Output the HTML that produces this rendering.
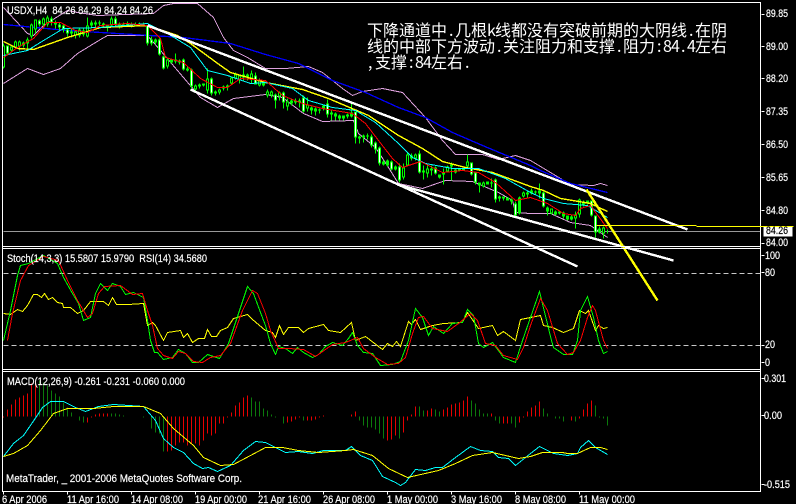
<!DOCTYPE html>
<html lang="zh"><head><meta charset="utf-8"><title>USDX,H4</title>
<style>
html,body{margin:0;padding:0;background:#000;width:796px;height:504px;overflow:hidden}
svg{display:block}
text{font-family:"Liberation Sans","WenQuanYi Zen Hei",sans-serif;font-size:11px;fill:#fff;stroke:#fff;stroke-width:.2}
.c{font-size:16px;font-family:"WenQuanYi Zen Hei","Noto Sans CJK SC",sans-serif;stroke:none}
.l{fill:none;shape-rendering:crispEdges}
</style></head><body>
<svg width="796" height="504" viewBox="0 0 796 504" xmlns="http://www.w3.org/2000/svg">
<rect width="796" height="504" fill="#000"/>
<g transform="translate(.5 .5)">
<!-- reference lines -->
<path class="l" stroke="#999" d="M3 231H760"/>
<path class="l" stroke="#c8c8c8" stroke-dasharray="5 3" d="M3 273H760M3 345H760"/>
<!-- bands -->
<polyline class="l" stroke="#dda0dd" points="3,7 27,33 33,35 43,25 67,10 77,12 97,15 153,13 163,5 173,3 197,3 213,17 223,37 233,50 247,57 265,68 285,68 308,66 322,72 342,88 352,95 362,91 382,88 402,92 425,117 442,140 455,154 482,154 498,159 515,155 530,160 570,184 593,185 600,183 607,185"/>
<polyline class="l" stroke="#dda0dd" points="3,83 27,68 43,74 60,68 77,53 100,39 107,35 147,35 160,50 177,70 200,97 217,107 233,98 265,94 282,97 303,113 322,121 353,120 358,133 375,147 388,167 398,183 422,188 445,180 472,181 498,192 512,200 515,212 530,213 550,213 570,222 590,225 607,237"/>
<polyline class="l" stroke="#0000ff" stroke-width="1.3" points="3,24 67,30 150,35 183,37 230,43 265,54 298,63 332,80 365,92 398,107 425,117 452,132 482,145 530,165 540,170 570,183 607,192"/>
<!-- candle wicks -->
<path class="l" stroke="#00ff00" d="M3 43V68M7 45V55M11 46V52M15 40V49M19 40V50M23 41V47M27 37V48M31 23V38M35 19V33M39 19V26M43 17V28M47 15V26M51 16V25M55 20V28M59 22V30M63 24V32M67 28V36M71 28V37M75 30V38M79 27V37M83 27V36M87 17V37M91 20V28M95 20V27M99 20V26M103 22V27M107 25V31M111 16V27M115 16V27M119 22V28M123 22V26M127 21V26M131 22V27M135 22V26M139 22V26M143 22V26M147 25V45M151 36V45M155 38V44M159 38V55M163 55V69M167 58V68M171 58V63M175 53V63M179 59V64M183 58V70M187 66V71M191 68V88M195 84V91M199 83V88M203 83V86M207 68V93M211 77V95M215 90V95M219 88V94M223 85V90M227 84V90M231 76V84M235 72V79M239 74V83M243 66V80M247 73V80M251 70V83M255 72V84M259 78V86M263 81V86M267 89V97M271 90V97M275 93V108M279 91V100M283 91V108M287 98V110M291 99V105M295 98V104M299 98V107M303 95V112M307 97V111M311 106V114M315 107V115M319 108V113M323 104V110M327 99V117M331 110V120M335 112V120M339 114V120M343 115V120M347 113V118M351 103V117M355 111V143M359 135V143M363 134V142M367 133V139M371 134V147M375 141V153M379 146V165M383 160V165M387 159V166M391 160V170M395 165V170M399 163V182M403 163V179M407 152V166M411 153V160M415 153V160M419 150V173M423 165V179M427 165V177M431 165V175M435 166V174M439 174V178M443 168V184M447 165V172M451 162V180M455 168V173M459 168V170M463 168V170M467 154V167M471 162V175M475 172V184M479 182V192M483 181V187M487 181V184M491 178V187M495 178V202M499 195V201M503 196V200M507 197V200M511 198V204M515 201V216M519 196V214M523 191V197M527 191V197M531 188V194M535 190V194M539 183V198M543 191V207M547 206V215M551 208V214M555 210V215M559 210V214M563 211V218M567 215V220M571 215V220M575 211V228M579 198V217M583 200V206M587 200V204M591 200V216M595 215V237M599 226V233M603 226V238M607 229V233"/>
<!-- candle bodies -->
<path class="l" stroke="#00ff00" stroke-width="3" d="M3 45V67M7 45V53M11 46V50M15 41V47M19 41V46M23 42V45M27 39V43M31 24V36M35 19V29M39 20V24M43 18V24M47 17V24M51 18V22M55 22V24M59 24V27M63 25V29M67 29V33M71 31V33M75 31V35M79 29V35M83 30V34M87 25V36M91 22V25M95 22V24M99 22V23M103 23V25M107 25V26M111 18V25M115 18V24M119 23V25M123 24V25M127 23V25M131 24V25M135 24V25M139 23V25M143 24V25M147 25V43M151 39V43M155 39V42M159 39V54M163 56V68M167 59V66M171 59V62M175 59V61M179 60V62M183 59V69M187 68V70M191 69V86M195 85V89M199 84V86M203 83V85M207 78V90M211 78V93M215 91V93M219 89V92M223 86V88M227 85V87M231 77V83M235 74V78M239 75V80M243 74V77M247 74V77M251 73V78M255 75V84M259 80V85M263 82V85M267 91V95M271 91V95M275 94V100M279 92V96M283 92V102M287 101V106M291 100V103M295 100V102M299 100V102M303 97V111M307 104V108M311 107V110M315 108V111M319 109V110M323 105V108M327 103V114M331 112V114M335 113V116M339 115V118M343 115V118M347 114V116M351 112V116M355 111V137M359 136V138M363 135V137M367 135V136M371 136V145M375 142V149M379 147V163M383 161V164M387 160V165M391 161V169M395 166V169M399 166V180M403 167V177M407 154V165M411 155V158M415 154V158M419 153V172M423 170V172M427 168V173M431 168V170M435 167V173M439 174V177M443 172V174M447 166V171M451 164V166M455 169V172M459 168V170M463 168V170M467 161V166M471 162V174M475 172V182M479 182V185M483 182V186M487 181V184M491 182V183M495 179V199M499 196V198M503 196V198M507 197V200M511 199V201M515 203V215M519 197V213M523 192V196M527 192V194M531 190V193M535 191V192M539 190V193M543 192V206M547 207V211M551 208V213M555 211V214M559 211V213M563 212V216M567 215V219M571 216V219M575 214V218M579 199V214M583 201V204M587 200V203M591 200V215M595 215V232M599 228V232M603 227V233"/>
<path class="l" stroke="#000" d="M3 46V66M11 47V49M15 42V46M19 42V45M27 40V42M31 25V35M35 20V28M43 19V23M47 18V23M75 32V34M79 30V34M87 26V35M111 19V24M167 60V65M195 86V88M207 79V89M219 90V91M231 78V82M235 75V77M239 76V79M243 75V76M251 74V77M259 81V84M267 92V94M271 92V94M279 93V95M287 102V105M307 105V107M403 168V176M407 155V164M415 155V157M427 169V172M447 167V170M467 162V165M483 183V185M523 193V195M551 209V212M575 215V217M579 200V213M603 228V232"/>
<path class="l" stroke="#fff" d="M7 46V52M39 21V23M51 19V21M59 25V26M63 26V28M67 30V32M83 31V33M115 19V23M147 26V42M151 40V42M159 40V53M163 57V67M183 60V68M191 70V85M211 79V92M255 76V83M275 95V99M283 93V101M303 98V110M327 104V113M355 112V136M371 137V144M375 143V148M379 148V162M391 162V168M399 167V179M419 154V171M435 168V172M471 163V173M475 173V181M495 180V198M515 204V214M543 193V205M591 201V214M595 216V231"/>
<!-- moving averages -->
<polyline class="l" stroke="#ffff00" stroke-width="1.4" points="3,41 17,48 33,49 67,37 100,27 147,25 177,35 190,43 220,65 230,72 265,82 302,89 328,98 368,115 398,135 422,148 442,161 465,167 492,172 530,186 543,190 560,198 590,203 607,211"/>
<polyline class="l" stroke="#00ffff" points="3,55 27,50 43,40 63,28 100,27 147,23 167,33 190,47 207,70 227,75 250,83 265,82 292,88 308,100 332,107 355,110 375,122 398,143 412,157 425,163 452,168 478,168 505,178 530,192 543,198 563,203 587,205 607,217"/>
<polyline class="l" stroke="#ff0000" points="3,57 17,47 33,38 47,22 60,22 75,30 87,32 100,25 127,23 147,25 160,38 165,57 183,62 200,78 217,87 227,87 240,78 265,80 282,95 302,103 322,108 352,113 365,123 378,140 392,158 402,167 420,161 442,172 462,170 478,172 495,182 515,200 530,197 547,203 563,213 575,215 580,208 590,205 607,228"/>
<!-- trend lines -->
<g stroke="#fff" stroke-width="2.4" fill="none" shape-rendering="crispEdges">
<path d="M147 25L687 229"/><path d="M190 89L577 266"/><path d="M397 184L673 260"/>
</g>
<path d="M586 189L657 300" stroke="#ffff00" stroke-width="2.4" fill="none" shape-rendering="crispEdges"/>
<path class="l" stroke="#ffff00" d="M596 225H696"/>
<!-- stochastic -->
<polyline class="l" stroke="#ffff00" points="3,313 10,314 17,309 22,311 27,305 33,294 37,294 41,297 44,293 48,299 52,297 57,302 62,303 63,307 70,307 77,313 83,310 90,301 103,301 108,305 112,297 116,304 128,304 143,303 147,325 152,322 155,325 163,340 167,332 180,330 183,337 187,333 192,342 198,338 204,338 207,329 211,336 216,336 220,330 227,327 233,318 247,314 252,319 265,330 272,332 275,337 279,325 283,334 288,327 298,327 303,332 308,328 323,324 328,330 340,332 351,322 355,340 365,336 382,349 387,343 392,346 396,341 400,346 408,321 411,324 415,319 420,329 432,325 443,323 462,322 467,312 478,328 492,325 497,335 503,331 515,340 520,319 530,317 540,315 543,325 552,327 563,332 573,328 579,310 585,313 588,310 595,330 598,325 603,328 607,327"/>
<polyline class="l" stroke="#00ff00" points="3,340 10,310 17,275 20,265 28,263 43,255 57,263 63,277 72,293 78,303 83,320 90,317 95,293 100,283 107,290 112,283 120,286 125,294 133,292 143,297 147,320 150,340 154,352 157,352 163,359 172,357 178,349 185,353 192,362 198,362 207,354 213,356 219,358 228,343 238,313 247,286 253,293 260,312 265,325 270,343 275,354 278,346 285,348 292,353 297,347 303,352 312,357 318,354 325,346 332,342 342,345 348,338 352,332 357,345 363,352 372,353 380,365 392,364 400,361 408,340 415,308 422,317 428,335 433,326 443,333 452,323 462,322 467,309 473,315 478,343 483,347 492,342 503,357 515,362 522,340 530,317 539,291 551,340 553,347 563,354 572,354 577,340 580,310 587,296 593,317 598,340 603,353 607,351"/>
<polyline class="l" stroke="#ff0000" points="7,340 12,313 20,280 28,265 43,256 58,260 67,280 77,300 87,317 92,313 98,293 104,286 120,285 132,294 142,293 147,310 152,325 157,348 163,355 172,358 178,351 185,353 193,361 202,362 210,357 220,355 230,343 242,310 252,290 257,293 265,313 270,330 278,348 288,348 303,349 315,356 332,344 345,342 357,337 363,348 375,357 387,364 398,363 405,357 412,333 418,317 423,316 432,328 447,331 458,323 470,313 477,320 485,343 495,345 503,355 517,359 523,347 530,325 540,298 547,310 557,343 567,354 573,352 580,340 587,317 592,305 595,310 603,340 607,348"/>
<!-- MACD histogram -->
<path class="l" stroke="#e60000" d="M3 416V417M7 409V416M11 404V416M15 399V416M19 397V416M23 395V416M27 393V416M31 383V416M35 381V416M87 417V422M91 416V417M95 414V416M99 413V416M103 413V416M107 413V416M167 416V451M171 416V450M175 416V445M179 416V442M183 416V442M187 416V445M191 416V444M195 416V443M199 416V445M203 416V440M207 416V433M211 416V435M215 416V433M219 416V423M223 416V423M227 416V417M231 412V416M235 405V416M239 402V416M243 397V416M247 395V416M287 416V422M291 416V421M295 416V419M299 416V417M307 416V420M311 416V420M315 416V419M319 416V417M323 415V416M351 414V416M355 411V416M387 416V440M391 416V439M395 416V435M403 416V432M407 416V420M411 414V416M415 406V416M427 410V416M431 408V416M443 409V416M447 407V416M451 404V416M455 403V416M459 402V416M463 400V416M467 396V416M491 413V416M503 416V423M507 416V423M519 416V422M523 416V417M527 411V416M531 407V416M535 405V416M539 401V416M571 416V420M579 416V418M583 409V416M587 403V416M591 400V416"/>
<path class="l" stroke="#0b7a0b" d="M39 380V416M43 382V416M47 385V416M51 390V416M55 393V416M59 396V416M63 402V416M67 407V416M71 412V416M79 416V420M83 416V422M111 413V416M115 413V416M119 414V416M123 415V416M143 416V417M151 416V428M155 416V432M159 416V433M163 416V451M251 397V416M255 401V416M259 401V416M263 408V416M267 410V416M271 414V416M275 416V417M283 416V423M303 416V420M359 416V420M363 416V425M367 416V427M371 416V427M375 416V429M379 416V433M383 416V438M399 416V438M419 406V416M423 410V416M435 409V416M439 411V416M471 400V416M475 403V416M479 409V416M483 413V416M487 413V416M495 416V420M499 416V423M511 416V423M515 416V427M543 408V416M547 413V416M555 416V418M559 416V418M563 416V421M575 416V421M595 405V416M599 416V417M603 416V418M607 416V425"/>
<!-- MACD lines -->
<polyline class="l" stroke="#00ffff" points="3,456 13,443 23,435 32,422 42,407 50,401 63,401 75,407 85,411 98,406 113,404 143,406 155,420 163,438 173,447 183,452 193,463 202,468 208,467 217,471 230,465 243,450 255,441 265,442 275,447 285,452 298,451 312,453 323,450 345,450 351,446 360,455 372,460 382,476 395,482 400,485 405,482 415,469 425,470 435,467 442,467 455,457 470,446 480,450 492,451 498,457 508,458 515,465 530,453 539,446 553,453 567,455 577,453 580,447 588,440 595,447 607,454"/>
<polyline class="l" stroke="#ffff00" points="3,456 13,453 27,445 40,430 53,413 67,408 93,408 113,406 143,406 160,413 173,428 193,445 203,457 220,465 233,464 250,455 265,447 282,447 298,450 318,452 345,450 353,449 372,455 388,468 407,477 438,470 455,463 472,455 492,452 518,458 530,456 542,452 562,452 567,453 577,453 590,447 600,447 607,449"/>
<!-- frame -->
<g stroke="#fff" fill="none" shape-rendering="crispEdges">
<path d="M2 2H760V491H2ZM2 246H760M2 248H760M2 369H760M2 371H760"/>
<path d="M761 14H764M761 46H764M761 78H764M761 111H764M761 144H764M761 177H764M761 210H764M761 243H764M761 255H764M761 272H764M761 345H764M761 362H764M761 378H764M761 415H764M761 484H764"/>
<path d="M3 491V494M67 491V494M131 491V494M195 491V494M259 491V494M323 491V494M387 491V494M451 491V494M515 491V494M579 491V494"/>
</g>
<rect x="763" y="226" width="29" height="10" fill="#fff"/>
<path class="l" stroke="#ffff00" d="M696 226H793"/>
</g>
<!-- axis labels -->
<text x="766" y="17" textLength="22" lengthAdjust="spacingAndGlyphs">89.85</text>
<text x="766" y="50" textLength="22" lengthAdjust="spacingAndGlyphs">89.00</text>
<text x="766" y="82" textLength="22" lengthAdjust="spacingAndGlyphs">88.20</text>
<text x="766" y="115" textLength="22" lengthAdjust="spacingAndGlyphs">87.35</text>
<text x="766" y="148" textLength="22" lengthAdjust="spacingAndGlyphs">86.50</text>
<text x="766" y="181" textLength="22" lengthAdjust="spacingAndGlyphs">85.65</text>
<text x="766" y="214" textLength="22" lengthAdjust="spacingAndGlyphs">84.80</text>
<text x="766" y="234" textLength="22" lengthAdjust="spacingAndGlyphs" style="fill:#000;stroke:#000">84.26</text>
<text x="766" y="246" textLength="22" lengthAdjust="spacingAndGlyphs">84.00</text>
<text x="765" y="259" textLength="15" lengthAdjust="spacingAndGlyphs">100</text>
<text x="765" y="276" textLength="10" lengthAdjust="spacingAndGlyphs">80</text>
<text x="765" y="348" textLength="10" lengthAdjust="spacingAndGlyphs">20</text>
<text x="765" y="366" textLength="5" lengthAdjust="spacingAndGlyphs">0</text>
<text x="764" y="382" textLength="22" lengthAdjust="spacingAndGlyphs">0.301</text>
<text x="764" y="419" textLength="18" lengthAdjust="spacingAndGlyphs">0.00</text>
<text x="764" y="488" textLength="26" lengthAdjust="spacingAndGlyphs">-0.515</text>
<!-- pane labels -->
<text x="7" y="14" xml:space="preserve" textLength="146" lengthAdjust="spacingAndGlyphs">USDX,H4  84.26 84.29 84.24 84.26</text>
<text x="7" y="262" xml:space="preserve" textLength="200" lengthAdjust="spacingAndGlyphs">Stoch(14,3,3) 15.5807 15.9790  RSI(14) 34.5680</text>
<text x="7" y="385" textLength="178" lengthAdjust="spacingAndGlyphs">MACD(12,26,9) -0.261 -0.231 -0.060 0.000</text>
<text x="6" y="482" textLength="236" lengthAdjust="spacingAndGlyphs">MetaTrader, _ 2001-2006 MetaQuotes Software Corp.</text>
<!-- annotation -->
<text class="c" y="36"><tspan x="367">下降通道中</tspan><tspan x="449">.</tspan><tspan x="455">几根</tspan><tspan x="487">k</tspan><tspan x="495">线都没有突破前期的大阴线</tspan><tspan x="689">.</tspan><tspan x="695">在阴</tspan></text>
<text class="c" y="52"><tspan x="367">线的中部下方波动</tspan><tspan x="497">.</tspan><tspan x="503">关注阻力和支撑</tspan><tspan x="617">.</tspan><tspan x="623">阻力</tspan><tspan x="657 663 671 681 687">:84.4</tspan><tspan x="695">左右</tspan></text>
<text class="c" y="68"><tspan x="368">,</tspan><tspan x="375">支撑</tspan><tspan x="409 415 423">:84</tspan><tspan x="431">左右</tspan><tspan x="465">.</tspan></text>
<!-- time axis -->
<text x="2" y="503" textLength="45" lengthAdjust="spacingAndGlyphs">6 Apr 2006</text>
<text x="67" y="503" textLength="52" lengthAdjust="spacingAndGlyphs">11 Apr 16:00</text>
<text x="131" y="503" textLength="52" lengthAdjust="spacingAndGlyphs">14 Apr 08:00</text>
<text x="195" y="503" textLength="52" lengthAdjust="spacingAndGlyphs">19 Apr 00:00</text>
<text x="258" y="503" textLength="53" lengthAdjust="spacingAndGlyphs">21 Apr 16:00</text>
<text x="323" y="503" textLength="52" lengthAdjust="spacingAndGlyphs">26 Apr 08:00</text>
<text x="387" y="503" textLength="51" lengthAdjust="spacingAndGlyphs">1 May 00:00</text>
<text x="451" y="503" textLength="51" lengthAdjust="spacingAndGlyphs">3 May 16:00</text>
<text x="515" y="503" textLength="51" lengthAdjust="spacingAndGlyphs">8 May 08:00</text>
<text x="579" y="503" textLength="56" lengthAdjust="spacingAndGlyphs">11 May 00:00</text>
</svg>
</body></html>
